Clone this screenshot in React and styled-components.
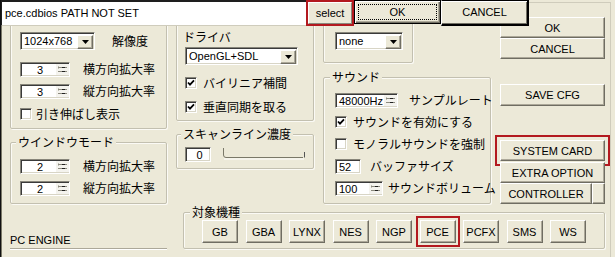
import React from "react";
import styled, { createGlobalStyle, css } from "styled-components";

const BG = "#ECE9D8";
const RED = "#B3191F";

const GlobalStyle = createGlobalStyle`
  * { box-sizing: border-box; }
  html, body { margin: 0; padding: 0; background: ${BG}; }
  body {
    font-family: "Liberation Sans", "Noto Sans CJK JP", sans-serif;
    font-size: 11px;
    color: #000;
  }
`;

const Screen = styled.div`
  position: relative;
  width: 615px;
  height: 257px;
  overflow: hidden;
  background: ${BG};
  border-left: 1px solid #111;
  box-shadow: inset 1px 0 0 #7a7868;
`;

const Dialog = styled.div`
  width: 610px;
  height: 255px;
  margin-top: 2px;
  border-top: 1px solid #cfccbc;
  border-right: 1px solid #cfccbc;
  padding-left: 9px;
  display: flex;
  gap: 9px;
`;

const Column = styled.div`
  width: ${(p) => p.$w}px;
  display: flex;
  flex-direction: column;
  flex-shrink: 0;
`;

const RightArea = styled.div`
  display: flex;
  flex-direction: column;
`;

const TopCols = styled.div`
  display: flex;
  gap: 9px;
`;

const Group = styled.div`
  position: relative;
  width: ${(p) => (p.$w ? `${p.$w}px` : "auto")};
  height: ${(p) => p.$h}px;
  margin-top: ${(p) => p.$mt ?? 0}px;
  margin-left: ${(p) => p.$ml ?? 0}px;
  padding: ${(p) => p.$pad ?? "0"};
  border: 1px solid #c3c0b0;
  border-radius: 2px;
  box-shadow: 1px 1px 0 #fbfaf5, inset 1px 1px 0 #fbfaf5;
  display: flex;
  flex-direction: column;
`;

const Legend = styled.span`
  position: absolute;
  top: -8px;
  left: ${(p) => p.$x ?? 5}px;
  padding: 0 2px;
  background: ${BG};
  font-family: "Noto Sans CJK JP", sans-serif;
  font-size: 12px;
  line-height: 14px;
  white-space: nowrap;
`;

const Row = styled.div`
  display: flex;
  align-items: center;
  height: ${(p) => p.$h ?? 22}px;
  margin-top: ${(p) => p.$mt ?? 0}px;
  gap: ${(p) => p.$gap ?? 6}px;
`;

const JpText = styled.span`
  font-family: "Noto Sans CJK JP", sans-serif;
  font-size: 12px;
  line-height: 14px;
  white-space: nowrap;
  margin-left: ${(p) => p.$ml ?? 0}px;
`;

const sunken = css`
  background: #fff;
  border: 1px solid;
  border-color: #87857a #fff #fff #87857a;
  box-shadow: inset 1px 1px 0 #3a3a3a, inset -1px -1px 0 #d8d5c6;
`;

const ComboBox = styled.div`
  ${sunken};
  width: ${(p) => p.$w}px;
  height: 18px;
  padding: 2px 1px 1px 2px;
  display: flex;
  align-items: center;
  flex-shrink: 0;
`;

const ComboValue = styled.span`
  flex: 1;
  padding-left: 1px;
  font-size: 11px;
  line-height: 13px;
  white-space: nowrap;
  overflow: hidden;
`;

const DropButton = styled.span`
  width: 16px;
  height: 14px;
  background: ${BG};
  border: 1px solid;
  border-color: #fff #716f64 #716f64 #fff;
  box-shadow: inset -1px -1px 0 #aca899;
  display: flex;
  align-items: center;
  justify-content: center;
`;

const FieldBox = styled.div`
  ${sunken};
  width: ${(p) => p.$w}px;
  height: 15px;
  padding: 1px 0 0 1px;
  display: flex;
  align-items: center;
  flex-shrink: 0;
`;

const FieldValue = styled.span`
  flex: 1;
  text-align: ${(p) => p.$align ?? "left"};
  padding-left: 2px;
  font-size: 11px;
  line-height: 12px;
  white-space: nowrap;
`;

const CheckBox = styled.span`
  ${sunken};
  width: 12px;
  height: 12px;
  display: inline-flex;
  align-items: center;
  justify-content: center;
  flex-shrink: 0;
`;

const Button = styled.button`
  font-family: "Liberation Sans", sans-serif;
  font-size: 11px;
  color: #000;
  width: ${(p) => (p.$w ? `${p.$w}px` : "100%")};
  height: ${(p) => p.$h ?? 21}px;
  margin-top: ${(p) => p.$mt ?? 0}px;
  padding: 0;
  background: ${BG};
  border: 1px solid;
  border-color: #fff #6f6d62 #6f6d62 #fff;
  box-shadow: inset -1px -1px 0 #aca899;
  display: flex;
  align-items: center;
  justify-content: center;
  flex-shrink: ${(p) => (p.$w ? 0 : 1)};
  outline: ${(p) => (p.$marked ? `2px solid ${RED}` : "none")};
  outline-offset: ${(p) => p.$off ?? 2}px;
`;

const ButtonRow = styled.div`
  display: flex;
  gap: ${(p) => p.$gap ?? 0}px;
  margin-top: ${(p) => p.$mt ?? 0}px;
`;

const SectionTitle = styled.div`
  margin-top: 29px;
  height: 16px;
  line-height: 15px;
  font-size: 11px;
  border-bottom: 1px solid #aca899;
  box-shadow: 0 1px 0 #fff;
`;

/* ---------- top overlay bar ---------- */
const TopBar = styled.div`
  position: absolute;
  top: 0;
  left: 0;
  display: flex;
  align-items: flex-start;
`;

const PathField = styled.div`
  width: 305px;
  height: 26px;
  background: #fff;
  border-top: 2px solid #1e1e1e;
  border-left: 1px solid #1e1e1e;
  border-bottom: 1px solid #cfccbc;
  padding: 0 0 2px 3px;
  display: flex;
  align-items: center;
  font-size: 11px;
  white-space: nowrap;
`;

const SelectFrame = styled.div`
  width: 48px;
  height: 26px;
  border: 2px solid ${RED};
  display: flex;
`;

const SelectButton = styled.button`
  flex: 1;
  padding: 0;
  font-family: "Liberation Sans", sans-serif;
  font-size: 11px;
  color: #000;
  background: ${BG};
  border: 1px solid;
  border-color: #fff #8a887c #8a887c #fff;
`;

const DefaultButton = styled.button`
  position: relative;
  width: 87px;
  height: 24px;
  padding: 0;
  font-family: "Liberation Sans", sans-serif;
  font-size: 11px;
  color: #000;
  background: ${BG};
  border: 1px solid #000;
  box-shadow: inset 1px 1px 0 #fff, inset -1px -1px 0 #716f64,
    inset -2px -2px 0 #aca899;
  &::after {
    content: "";
    position: absolute;
    inset: 3px 3px 3px 3px;
    border: 1px dotted #000;
  }
`;

const TopCancel = styled.button`
  width: 88px;
  height: 26px;
  padding: 0 0 2px;
  font-family: "Liberation Sans", sans-serif;
  font-size: 11px;
  color: #000;
  background: ${BG};
  border: 1px solid;
  border-width: 1px 2px 2px 1px;
  border-color: #000 #000 #000 #fff;
  box-shadow: inset 0 1px 0 #fff, inset -1px -1px 0 #716f64;
`;

/* ---------- drawings ---------- */
const DownArrow = () => (
  <svg width="7" height="4" viewBox="0 0 7 4">
    <path d="M0 0h7L3.5 4z" fill="#000" />
  </svg>
);

const CheckMark = () => (
  <svg width="8" height="8" viewBox="0 0 8 8">
    <path d="M1 3.5 L3 5.6 L7 1.4" stroke="#000" strokeWidth="1.8" fill="none" />
  </svg>
);

const SpinArrows = () => (
  <svg width="13" height="11" viewBox="0 0 13 11">
    <rect x="0" y="0" width="13" height="11" fill="#f4f3ee" />
    <path d="M2.5 2.5v2 M2 3.5h9 M2 7.5h9" stroke="#8c8a7e" strokeWidth="1" />
    <path d="M6 3.5h3 M6 7.5h3" stroke="#222" strokeWidth="1" />
  </svg>
);

const SliderTrack = () => (
  <svg width="84" height="14" viewBox="0 0 84 14">
    <path d="M1.5 1 V8 Q1.5 10.5 4 10.5 H81" stroke="#7a7868" fill="none" />
    <path d="M2 12 H82" stroke="#ffffff" />
    <path d="M82.5 5 V10.5" stroke="#555" />
  </svg>
);

/* ---------- composite parts ---------- */
const Combo = ({ w, value }) => (
  <ComboBox $w={w}>
    <ComboValue>{value}</ComboValue>
    <DropButton>
      <DownArrow />
    </DropButton>
  </ComboBox>
);

const Spin = ({ w, value, align }) => (
  <FieldBox $w={w}>
    <FieldValue $align={align}>{value}</FieldValue>
    <SpinArrows />
  </FieldBox>
);

const Edit = ({ w, value, align }) => (
  <FieldBox $w={w}>
    <FieldValue $align={align}>{value}</FieldValue>
  </FieldBox>
);

const Check = ({ on, label, gap = 6 }) => (
  <Row $gap={gap}>
    <CheckBox>{on && <CheckMark />}</CheckBox>
    <JpText>{label}</JpText>
  </Row>
);

const targets = ["GB", "GBA", "LYNX", "NES", "NGP", "PCE", "PCFX", "SMS", "WS"];

const TargetRow = styled.div`
  display: flex;
  gap: 7.5px;
`;

export default function App() {
  return (
    <>
      <GlobalStyle />
      <Screen>
        <Dialog>
          <Column $w={157}>
            <Group $h={109} $mt={17} $pad="9px 0 0 9px">
              <Row $gap={17}>
                <Combo w={75} value="1024x768" />
                <JpText>解像度</JpText>
              </Row>
              <Row $mt={6} $gap={13}>
                <Spin w={50} value="3" align="center" />
                <JpText>横方向拡大率</JpText>
              </Row>
              <Row $gap={13}>
                <Spin w={50} value="3" align="center" />
                <JpText>縦方向拡大率</JpText>
              </Row>
              <Row $mt={1} $gap={4}>
                <CheckBox />
                <JpText>引き伸ばし表示</JpText>
              </Row>
            </Group>
            <Group $h={62} $mt={13} $pad="12px 0 0 9px">
              <Legend $x={5}>ウインドウモード</Legend>
              <Row $gap={13}>
                <Spin w={50} value="2" align="center" />
                <JpText>横方向拡大率</JpText>
              </Row>
              <Row $gap={13}>
                <Spin w={50} value="2" align="center" />
                <JpText>縦方向拡大率</JpText>
              </Row>
            </Group>
            <SectionTitle>PC ENGINE</SectionTitle>
          </Column>

          <RightArea>
            <TopCols>
              <Column $w={138}>
                <Group $h={101} $mt={17} $pad="9px 0 0 8px">
                  <JpText $ml={-2}>ドライバ</JpText>
                  <Row $h={18} $mt={3}>
                    <Combo w={113} value="OpenGL+SDL" />
                  </Row>
                  <Row $mt={7} $h={22}>
                    <Check on label="バイリニア補間" />
                  </Row>
                  <Row $mt={2} $h={22}>
                    <Check on label="垂直同期を取る" />
                  </Row>
                </Group>
                <Group $h={35} $mt={13} $pad="8px 0 0 8px">
                  <Legend $x={4}>スキャンライン濃度</Legend>
                  <Row $gap={11}>
                    <Edit w={26} value="0" align="center" />
                    <SliderTrack />
                  </Row>
                </Group>
              </Column>

              <Column $w={168}>
                <Group $w={90} $h={43} $mt={17} $pad="11px 0 0 11px">
                  <Combo w={68} value="none" />
                </Group>
                <Group $h={127} $mt={14} $pad="11px 0 0 11px">
                  <Legend $x={6}>サウンド</Legend>
                  <Row $gap={11}>
                    <Spin w={63} value="48000Hz" />
                    <JpText>サンプルレート</JpText>
                  </Row>
                  <Check on label="サウンドを有効にする" />
                  <Check label="モノラルサウンドを強制" />
                  <Row $gap={9}>
                    <Edit w={26} value="52" />
                    <JpText>バッファサイズ</JpText>
                  </Row>
                  <Row $gap={5}>
                    <Spin w={48} value="100" />
                    <JpText>サウンドボリューム</JpText>
                  </Row>
                </Group>
              </Column>

              <Column $w={105}>
                <Button $mt={14}>OK</Button>
                <Button>CANCEL</Button>
                <Button $mt={25} $h={22}>SAVE CFG</Button>
                <Button $mt={34} $marked $off={3}>SYSTEM CARD</Button>
                <Button $mt={1}>EXTRA OPTION</Button>
                <ButtonRow>
                  <Button>CONTROLLER</Button>
                  <Button $w={13} />
                </ButtonRow>
              </Column>
            </TopCols>

            <Group $w={422} $h={37} $mt={8} $ml={7} $pad="7px 0 0 18px">
              <Legend $x={6}>対象機種</Legend>
              <TargetRow>
                {targets.map((t) => (
                  <Button key={t} $w={36} $h={23} $marked={t === "PCE"} $off={2}>
                    {t}
                  </Button>
                ))}
              </TargetRow>
            </Group>
          </RightArea>
        </Dialog>

        <TopBar>
          <PathField>pce.cdbios PATH NOT SET</PathField>
          <SelectFrame>
            <SelectButton>select</SelectButton>
          </SelectFrame>
          <DefaultButton>OK</DefaultButton>
          <TopCancel>CANCEL</TopCancel>
        </TopBar>
      </Screen>
    </>
  );
}
